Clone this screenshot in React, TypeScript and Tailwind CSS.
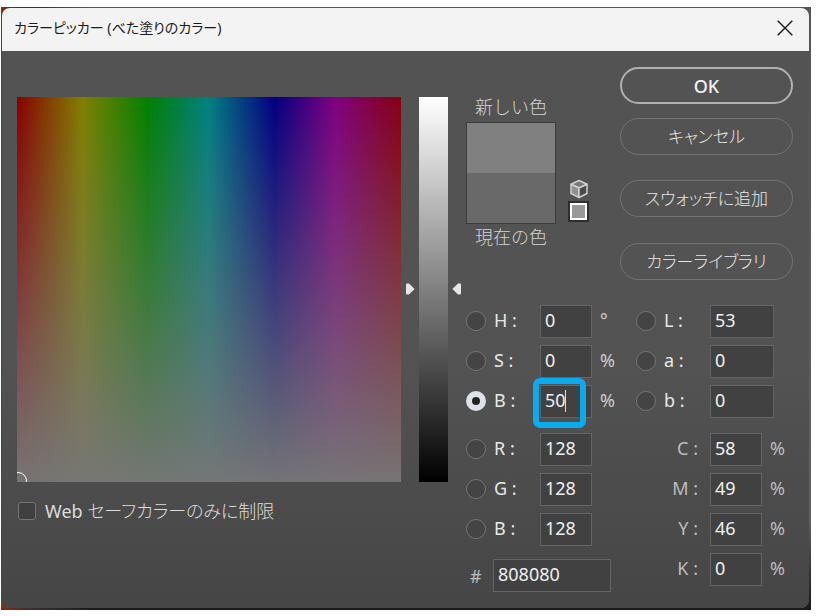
import { useState } from "react";

const inputBase =
  "h-[33px] border border-[#646464] bg-[#414141] px-1 pb-[3px] text-[18px] leading-6 text-[#f0f0f0] outline-none";

function Radio({ id, checked, onSelect }: { id: string; checked: boolean; onSelect: (id: string) => void }) {
  return (
    <input
      type="radio"
      id={"mode-" + id}
      name="mode"
      checked={checked}
      onChange={() => onSelect(id)}
      className="mb-[2px] size-[20px] shrink-0 appearance-none rounded-full border border-[#757575] bg-[#444444] checked:border-[6px] checked:border-[#dde1e8] checked:bg-[#222222]"
    />
  );
}

type RowProps = {
  id: string;
  label: string;
  value: string;
  unit?: string;
  mode: string;
  onSelect: (id: string) => void;
  active?: boolean;
};

function LeftRow({ id, label, value, unit, mode, onSelect, active }: RowProps) {
  return (
    <div className="flex h-[33px] items-center">
      <Radio id={id} checked={mode === id} onSelect={onSelect} />
      <label htmlFor={"mode-" + id} className="ml-2 w-[46px] pb-[3px] whitespace-pre">
        {label} :
      </label>
      <div className="relative">
        <input
          aria-label={label}
          defaultValue={value}
          className={inputBase + " block w-[52px] " + (active ? "border-[#3a5f9a] bg-[#3c4250]" : "")}
        />
        {active && (
          <>
            <span className="absolute top-[5px] left-[25px] h-[22px] w-px bg-[#dddddd]" />
            <span className="absolute -top-[7px] -left-[7px] h-[50px] w-[53px] rounded-[7px] border-[6px] border-[#08aaf0]" />
          </>
        )}
      </div>
      <span className="ml-2 pb-[3px] text-[#cfcfcf]">{unit}</span>
    </div>
  );
}

function LabRow({ id, label, value, mode, onSelect }: RowProps) {
  return (
    <div className="flex h-[33px] items-center">
      <Radio id={id} checked={mode === id} onSelect={onSelect} />
      <label htmlFor={"mode-" + id} className="ml-2 w-[46px] pb-[3px] whitespace-pre">
        {label} :
      </label>
      <input aria-label={label} defaultValue={value} className={inputBase + " w-16"} />
    </div>
  );
}

function CmykRow({ label, value }: { label: string; value: string }) {
  return (
    <div className="flex h-[33px] items-center text-[#bdbdbd]">
      <label htmlFor={"cmyk-" + label} className="mr-3 w-[62px] pb-[3px] text-right whitespace-pre">
        {label} :
      </label>
      <input id={"cmyk-" + label} defaultValue={value} className={inputBase + " w-[52px]"} />
      <span className="ml-2 pb-[3px]">%</span>
    </div>
  );
}

const pill =
  "h-[37px] w-full rounded-full border border-[#737373] text-[17px] leading-6 font-light text-[#e6e6e6] [font-feature-settings:'palt']";

export default function App() {
  const [mode, setMode] = useState("B");
  const row = { mode, onSelect: setMode };

  return (
    <main className="min-h-screen bg-white pt-[7px] pr-[5px] pl-px font-['Noto_Sans','Noto_Sans_CJK_JP',sans-serif]">
      <div className="bg-[linear-gradient(90deg,#8a2c08,#3a302c_30px,transparent_90px),linear-gradient(#555555_0%,#606060_85%,#1c1c1c_99%)] pt-px pr-[2px] pb-[2px] pl-px">
        <section className="overflow-hidden rounded-lg bg-[#535353]" aria-label="カラーピッカー">
          <header className="flex h-[43px] items-center justify-between bg-[#f3f3f3] pr-4 pb-[3px] pl-3">
            <h1 className="text-[14px] leading-6 text-[#1a1a1a] [font-feature-settings:'palt']">
              カラーピッカー (べた塗りのカラー)
            </h1>
            <button aria-label="閉じる" className="size-4">
              <svg viewBox="0 0 16 16" className="size-4" stroke="#1a1a1a" strokeWidth="1.4" fill="none">
                <path d="M.7 .7 15.3 15.3M15.3 .7 .7 15.3" />
              </svg>
            </button>
          </header>

          <div className="flex bg-[linear-gradient(#535353_55%,#464646)] pt-4 pr-4 pb-4 pl-[15px] text-[18px] leading-6 text-[#e8e8e8]">
            <div className="min-w-0 flex-1 pt-[30px]">
              <div className="flex h-[385px]">
                <div className="relative flex-1 overflow-hidden bg-[linear-gradient(rgba(128,128,128,0),rgba(118,118,118,0.98)),linear-gradient(90deg,#880000,#808000_17%,#008000_34%,#008080_50%,#000080_67%,#800080_83%,#880010)]">
                  <span className="absolute -bottom-2 -left-2 size-[18px] rounded-full border border-white" />
                </div>
                <div className="flex w-[18px] flex-col pt-[186px] pl-1">
                  <svg viewBox="0 0 10 12" className="h-3 w-[10px]" fill="#e6e6e6">
                    <path d="M1 1.2Q1 .5 2 .5H4L9.6 6 4 11.5H2Q1 11.5 1 10.8Z" />
                  </svg>
                </div>
                <div className="relative w-[29px] bg-[linear-gradient(#ffffff,#808080_50%,#000000)]">
                  <input
                    type="range"
                    aria-label="明るさ"
                    defaultValue={50}
                    className="absolute inset-0 size-full opacity-0"
                  />
                </div>
                <div className="flex w-[18px] flex-col pt-[186px] pl-1">
                  <svg viewBox="0 0 10 12" className="h-3 w-[10px]" fill="#e6e6e6">
                    <path d="M9 1.2Q9 .5 8 .5H6L.4 6 6 11.5H8Q9 11.5 9 10.8Z" />
                  </svg>
                </div>
              </div>
              <label className="mt-[17px] flex items-center gap-[9px] pl-px">
                <input
                  type="checkbox"
                  className="size-[18px] appearance-none rounded-[3px] border border-[#747474] bg-[#404040]"
                />
                <span className="font-light text-[#dddddd] [font-feature-settings:'palt']">
                  <span className="font-normal">Web</span> セーフカラーのみに制限
                </span>
              </label>
            </div>

            <div className="w-[327px] shrink-0">
              <div className="flex">
                <div className="flex w-[90px] flex-col items-center pt-[27px] text-[18px] leading-[26px] font-light text-[#d2d2d2]">
                  <span>新しい色</span>
                  <div className="mt-[2px] h-[102px] w-[90px] border border-[#3c3c3c]">
                    <div className="h-1/2 bg-[#808080]" />
                    <div className="h-1/2 bg-[#696969]" />
                  </div>
                  <span>現在の色</span>
                </div>
                <div className="ml-3 flex w-[21px] flex-col items-center pt-[112px]">
                  <button aria-label="Web セーフカラーではありません">
                    <svg viewBox="0 0 20 20" className="block size-5" stroke="#cfcfcf" strokeWidth="1.5" strokeLinejoin="round">
                      <path d="M10 1.5 18 5.2 10 9 2 5.2Z" fill="#777777" />
                      <path d="M2 5.2 10 9V18.5L2 14.5Z" fill="#909090" />
                      <path d="M18 5.2 10 9V18.5L18 14.5Z" fill="#4a4a4a" />
                    </svg>
                  </button>
                  <button
                    aria-label="Web セーフカラーを選択"
                    className="mt-[2px] size-[21px] border-2 border-[#2f2f2f] bg-[#999999] p-0"
                  >
                    <span className="block size-[17px] border-2 border-white" />
                  </button>
                </div>
                <div className="ml-[31px] flex flex-1 flex-col">
                  <button className="h-[37px] w-full rounded-full border-2 border-[#b0b0b0] text-[18px] leading-6 font-medium text-[#f2f2f2]">
                    OK
                  </button>
                  <button className={pill + " mt-[14px]"}>キャンセル</button>
                  <button className={pill + " mt-[25px]"}>スウォッチに追加</button>
                  <button className={pill + " mt-[26px]"}>カラーライブラリ</button>
                </div>
              </div>

              <div className="mt-[25px] flex">
                <div className="flex w-[170px] flex-col">
                  <div className="flex flex-col gap-[7px]">
                    <LeftRow id="H" label="H" value="0" unit="°" {...row} />
                    <LeftRow id="S" label="S" value="0" unit="%" {...row} />
                    <LeftRow id="B" label="B" value="50" unit="%" active {...row} />
                  </div>
                  <div className="mt-[15px] flex flex-col gap-[7px]">
                    <LeftRow id="R" label="R" value="128" {...row} />
                    <LeftRow id="G" label="G" value="128" {...row} />
                    <LeftRow id="Blue" label="B" value="128" {...row} />
                  </div>
                  <div className="mt-[13px] flex items-center">
                    <label htmlFor="hex" className="w-[27px] pl-1 text-[#bdbdbd]">
                      #
                    </label>
                    <input id="hex" defaultValue="808080" className={inputBase + " w-[118px]"} />
                  </div>
                </div>
                <div className="flex flex-col">
                  <div className="flex flex-col gap-[7px]">
                    <LabRow id="L" label="L" value="53" {...row} />
                    <LabRow id="a" label="a" value="0" {...row} />
                    <LabRow id="b" label="b" value="0" {...row} />
                  </div>
                  <div className="mt-[15px] flex flex-col gap-[7px]">
                    <CmykRow label="C" value="58" />
                    <CmykRow label="M" value="49" />
                    <CmykRow label="Y" value="46" />
                    <CmykRow label="K" value="0" />
                  </div>
                </div>
              </div>
            </div>
          </div>
        </section>
      </div>
    </main>
  );
}
